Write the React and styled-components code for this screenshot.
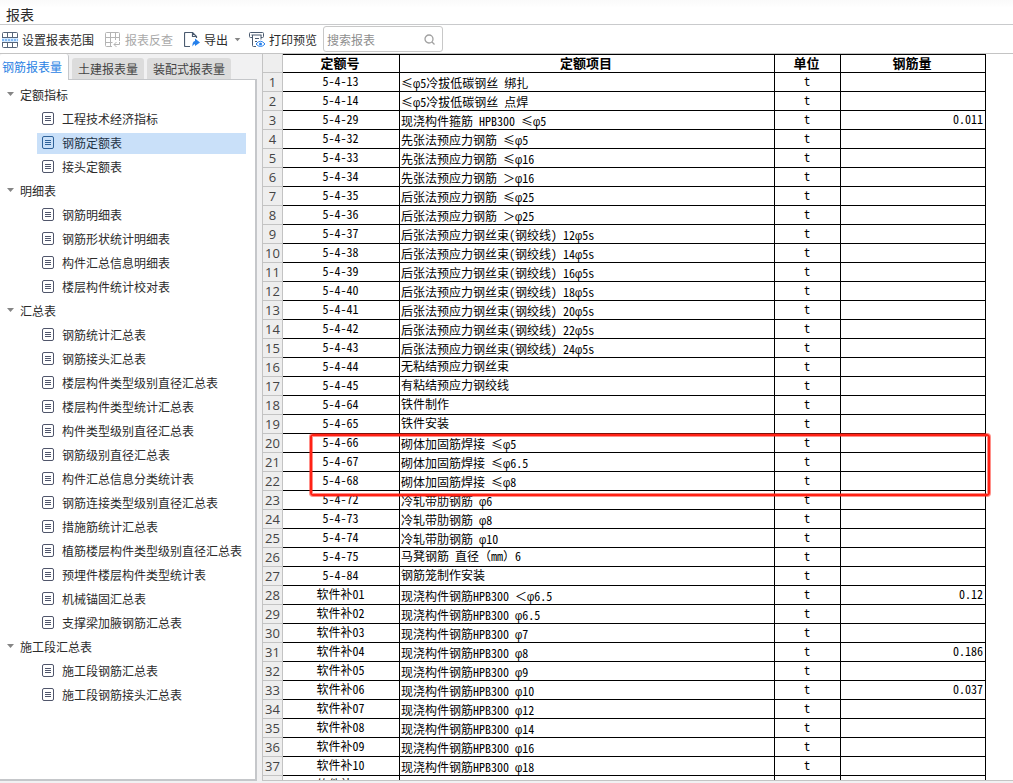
import { useState } from "react";
import styled, { createGlobalStyle, css } from "styled-components";

const GlobalStyle = createGlobalStyle`
  * {
    box-sizing: border-box;
  }
  body {
    margin: 0;
    background: #fff;
    color: #2b2b2b;
    font-family: "Noto Sans CJK SC", sans-serif;
    font-size: 12px;
  }
  button {
    border: none;
    background: none;
    padding: 0;
    color: inherit;
    font: inherit;
    cursor: pointer;
  }
`;

const Window = styled.div`
  display: flex;
  flex-direction: column;
  height: 100vh;
  overflow: hidden;
`;
const TitleBar = styled.header`
  flex: none;
  height: 25px;
  padding: 4px 6px 0;
  border-bottom: 1px solid #c9cacc;
  background: linear-gradient(#fafafa, #fff 8px);
`;
const Title = styled.h1`
  margin: 0;
  font-size: 14px;
  font-weight: 400;
  line-height: 20px;
`;

//工具栏
const Toolbar = styled.div`
  flex: none;
  display: flex;
  align-items: center;
  gap: 6px;
  height: 29px;
  padding-left: 2px;
  border-bottom: 1px solid #c4c4c4;
`;
const ToolGroup = styled.div`
  display: flex;
  gap: 11px;
`;
const ToolButton = styled.button`
  display: flex;
  align-items: center;
  gap: 4px;
  padding-top: 2px;
  line-height: 18px;
  white-space: nowrap;
  &:disabled {
    color: #a9a9a9;
    cursor: default;
  }
`;
const SearchBox = styled.label`
  display: flex;
  align-items: center;
  width: 120px;
  height: 26px;
  padding: 0 7px 0 3px;
  border: 1px solid #c8c8c8;
  border-radius: 3px;
  background: #fff;
`;
const SearchInput = styled.input`
  flex: 1;
  min-width: 0;
  padding: 0;
  border: none;
  outline: none;
  background: none;
  font: inherit;
  &::placeholder {
    color: #8e8e8e;
    opacity: 1;
  }
`;

const Body = styled.div`
  flex: 1;
  display: flex;
  min-height: 0;
  padding-bottom: 2px;
  background: #f1f1f2;
`;
const Side = styled.aside`
  flex: none;
  display: flex;
  flex-direction: column;
  width: 257px;
  margin-right: 5px;
`;
const Tabs = styled.div`
  flex: none;
  display: flex;
  align-items: flex-end;
  gap: 3px;
  height: 25px;
`;
const Tab = styled.button`
  height: 21px;
  padding: 0 6px;
  border-radius: 3px 3px 0 0;
  background: #dcdcdc;
  color: #444;
  line-height: 20px;
  ${(props) =>
    props.$active &&
    css`
      position: relative;
      height: 26px;
      margin-bottom: -1px;
      padding: 0 6px 0 2px;
      border-right: 1px solid #c5c7ca;
      background: #fff;
      color: #2a82e4;
      line-height: 26px;
    `}
`;
const TreePanel = styled.nav`
  flex: 1;
  min-height: 0;
  overflow: hidden;
  padding-top: 3px;
  border: solid #c5c7ca;
  border-width: 1px 2px 2px 0;
  background: #fff;
`;
const GroupButton = styled.button`
  display: flex;
  align-items: center;
  gap: 6px;
  width: 100%;
  height: 24px;
  padding: 0 0 2px 7px;
`;
const TreeList = styled.ul`
  margin: 0;
  padding: 0 9px 0 37px;
  list-style: none;
`;
const TreeItem = styled.li`
  height: 24px;
  padding: 2px 0 1px;
`;
const ReportButton = styled.button`
  display: flex;
  align-items: center;
  gap: 8px;
  width: 100%;
  height: 21px;
  padding: 0 0 2px 5px;
  color: ${(props) => (props.$selected ? "#1f3447" : "#2b2b2b")};
  background: ${(props) => (props.$selected ? "#c9e0f9" : "transparent")};
  white-space: nowrap;
`;

//报表表格
const SheetArea = styled.main`
  flex: 1;
  min-width: 0;
  overflow: hidden;
  border-bottom: 1px solid #c4c4c4;
  background: #fff;
`;
const Sheet = styled.div`
  position: relative;
  width: 724px;
`;
const Table = styled.table`
  width: 100%;
  border-collapse: separate;
  border-spacing: 0;
  border-left: 1px solid #c3c3c3;
  table-layout: fixed;
  color: #000;
  line-height: 16px;
  font-feature-settings: "hwid";
`;
const HeadCell = styled.th`
  height: 19px;
  padding: 0 2px 0 0;
  border: solid #000;
  border-width: 1px 1px 1px 0;
  font-size: 13px;
  vertical-align: top;
`;
const RowHead = styled.th`
  height: 19px;
  padding: 0;
  border: solid #c3c3c3;
  border-width: 0 1px 1px 0;
  background: #eee;
  color: #444;
  font-family: "Open Sans", sans-serif;
  font-size: 13px;
  font-weight: 400;
  line-height: 18px;
  vertical-align: top;
`;
const Cell = styled.td`
  height: 19px;
  padding: ${(props) => (props.$low ? "2px" : "0")} 2px 0 1px;
  border: solid #000;
  border-width: 0 1px 1px 0;
  text-align: ${(props) => props.$align || "center"};
  vertical-align: top;
  white-space: pre;
`;
const Phi = styled.span`
  font-family: "Liberation Mono", monospace;
  line-height: 0;
`;
const FullWidth = styled.span`
  font-feature-settings: normal;
`;
const Highlight = styled.div`
  position: absolute;
  top: 380px;
  left: 48px;
  width: 680px;
  height: 62px;
  border: 2px solid #ff2215;
  border-radius: 3px;
  box-shadow:
    0 0 0 1px #ff221580,
    inset 0 0 0 1px #ff221580;
  pointer-events: none;
`;

const GridIcon = () => (
  <svg width="16" height="16" fill="none" stroke="#56657a">
    <path fill="#d4e9ff" stroke="none" d="M0 6h16v4H0z" />
    <path d="M.5 6V1.500q0-1 1-1h13q1 0 1 1V6M.5 10v4.500q0 1 1 1h13q1 0 1-1V10M5.500.5V6M5.500 10v5.500M10.500.5V6M10.500 10v5.500M.5 5.500h15M.5 10.500h15" />
    <path stroke="#2f87e8" strokeDasharray="2 1" d="M0 8h16" />
  </svg>
);
const TraceIcon = () => (
  <svg width="16" height="16" fill="none" stroke="#b4b4b4">
    <path d="M14.500 9V1.500q0-1-1-1h-12q-1 0-1 1v12q0 1 1 1H7M.5 5.500h14M.5 10.500h7M5.500.5v14M10.500.5V8M9 12.500h5.500V10M11.500 10L9 12.500l2.500 2.500" />
  </svg>
);
const ExportIcon = () => (
  <svg width="16" height="16" fill="none" stroke="#4b5b70">
    <path
      d="M6 14.500H1.500q-1 0-1-1v-12q0-1 1-1H8.500L12.500 4.500V6M8.500.5v4h4"
      strokeWidth="1.200"
    />
    <path
      fill="#2680eb"
      stroke="none"
      d="M11 6.500l5 4-5 3.500v-2q-1.500 0-2.500 2.500-.5-5 2.500-5.500z"
    />
  </svg>
);
const PrintIcon = () => (
  <svg width="16" height="16" fill="none" stroke="#4b5b70">
    <path d="M3 5.500H1.500q-1 0-1-1v-3q0-1 1-1h12q1 0 1 1v3q0 1-1 1H12M2.500 3h10M3.500 3v10.500q0 1 1 1H7M12 3v4.500M6 6.500h4M6 9.500h2" />
    <path fill="#fff" stroke="#2680eb" d="M7 12q4.500-5.500 9 0-4.500 5-9 0z" />
    <circle cx="11.500" cy="12" r="1.500" fill="#2680eb" stroke="none" />
  </svg>
);
const CaretIcon = ({ width = 7, height = 5 }) => (
  <svg width={width} height={height} viewBox="0 0 7 5">
    <path fill="#858585" d="M0 0h7L3.500 4z" />
  </svg>
);
const SearchIcon = () => (
  <svg width="11" height="11" fill="none" stroke="#a0a0a0" strokeWidth="1.300">
    <circle cx="5" cy="5" r="4" />
    <path d="M8 8l2.500 2.500" />
  </svg>
);
const ReportIcon = ({ selected }) => (
  <svg
    width="12"
    height="13"
    fill="none"
    stroke={selected ? "#2f6299" : "#50566b"}
  >
    <rect x=".5" y=".5" width="11" height="12" rx="1.500" />
    <path d="M3 4.500h6M3 6.500h6M3 8.500h6" />
  </svg>
);

const tabs = ["钢筋报表量", "土建报表量", "装配式报表量"];

const groups = [
  {
    name: "定额指标",
    reports: ["工程技术经济指标", "钢筋定额表", "接头定额表"],
  },
  {
    name: "明细表",
    reports: [
      "钢筋明细表",
      "钢筋形状统计明细表",
      "构件汇总信息明细表",
      "楼层构件统计校对表",
    ],
  },
  {
    name: "汇总表",
    reports: [
      "钢筋统计汇总表",
      "钢筋接头汇总表",
      "楼层构件类型级别直径汇总表",
      "楼层构件类型统计汇总表",
      "构件类型级别直径汇总表",
      "钢筋级别直径汇总表",
      "构件汇总信息分类统计表",
      "钢筋连接类型级别直径汇总表",
      "措施筋统计汇总表",
      "植筋楼层构件类型级别直径汇总表",
      "预埋件楼层构件类型统计表",
      "机械锚固汇总表",
      "支撑梁加腋钢筋汇总表",
    ],
  },
  {
    name: "施工段汇总表",
    reports: ["施工段钢筋汇总表", "施工段钢筋接头汇总表"],
  },
];

//定额号, 定额项目, 钢筋量
const rows = [
  ["5-4-13", "≤φ5冷拔低碳钢丝 绑扎"],
  ["5-4-14", "≤φ5冷拔低碳钢丝 点焊"],
  ["5-4-29", "现浇构件箍筋 HPB300 ≤φ5", "0.011"],
  ["5-4-32", "先张法预应力钢筋 ≤φ5"],
  ["5-4-33", "先张法预应力钢筋 ≤φ16"],
  ["5-4-34", "先张法预应力钢筋 ＞φ16"],
  ["5-4-35", "后张法预应力钢筋 ≤φ25"],
  ["5-4-36", "后张法预应力钢筋 ＞φ25"],
  ["5-4-37", "后张法预应力钢丝束(钢绞线) 12φ5s"],
  ["5-4-38", "后张法预应力钢丝束(钢绞线) 14φ5s"],
  ["5-4-39", "后张法预应力钢丝束(钢绞线) 16φ5s"],
  ["5-4-40", "后张法预应力钢丝束(钢绞线) 18φ5s"],
  ["5-4-41", "后张法预应力钢丝束(钢绞线) 20φ5s"],
  ["5-4-42", "后张法预应力钢丝束(钢绞线) 22φ5s"],
  ["5-4-43", "后张法预应力钢丝束(钢绞线) 24φ5s"],
  ["5-4-44", "无粘结预应力钢丝束"],
  ["5-4-45", "有粘结预应力钢绞线"],
  ["5-4-64", "铁件制作"],
  ["5-4-65", "铁件安装"],
  ["5-4-66", "砌体加固筋焊接 ≤φ5"],
  ["5-4-67", "砌体加固筋焊接 ≤φ6.5"],
  ["5-4-68", "砌体加固筋焊接 ≤φ8"],
  ["5-4-72", "冷轧带肋钢筋 φ6"],
  ["5-4-73", "冷轧带肋钢筋 φ8"],
  ["5-4-74", "冷轧带肋钢筋 φ10"],
  ["5-4-75", "马凳钢筋 直径（mm）6"],
  ["5-4-84", "钢筋笼制作安装"],
  ["软件补01", "现浇构件钢筋HPB300 ＜φ6.5", "0.12"],
  ["软件补02", "现浇构件钢筋HPB300 φ6.5"],
  ["软件补03", "现浇构件钢筋HPB300 φ7"],
  ["软件补04", "现浇构件钢筋HPB300 φ8", "0.186"],
  ["软件补05", "现浇构件钢筋HPB300 φ9"],
  ["软件补06", "现浇构件钢筋HPB300 φ10", "0.037"],
  ["软件补07", "现浇构件钢筋HPB300 φ12"],
  ["软件补08", "现浇构件钢筋HPB300 φ14"],
  ["软件补09", "现浇构件钢筋HPB300 φ16"],
  ["软件补10", "现浇构件钢筋HPB300 φ18"],
  ["软件补11", "现浇构件钢筋HPB300 φ20"],
];

//φ和全角符号要单独处理, 否则宽度不对
function ItemName({ text }) {
  return text.split(/([φ＜＞（）])/).map((part, index) => {
    if (part === "φ") return <Phi key={index}>{part}</Phi>;
    if (index % 2 === 1) return <FullWidth key={index}>{part}</FullWidth>;
    return part;
  });
}

function ReportTree() {
  const [selected, setSelected] = useState("钢筋定额表");
  const [closed, setClosed] = useState([]);
  const toggle = (name) => {
    if (closed.includes(name)) {
      setClosed(closed.filter((item) => item !== name));
    } else {
      setClosed([...closed, name]);
    }
  };
  return (
    <TreePanel>
      {groups.map((group) => (
        <div key={group.name}>
          <GroupButton onClick={() => toggle(group.name)}>
            <CaretIcon />
            {group.name}
          </GroupButton>
          {!closed.includes(group.name) && (
            <TreeList>
              {group.reports.map((name) => (
                <TreeItem key={name}>
                  <ReportButton
                    $selected={selected === name}
                    onClick={() => setSelected(name)}
                  >
                    <ReportIcon selected={selected === name} />
                    {name}
                  </ReportButton>
                </TreeItem>
              ))}
            </TreeList>
          )}
        </div>
      ))}
    </TreePanel>
  );
}

function ReportSheet() {
  return (
    <SheetArea>
      <Sheet>
        <Table>
          <colgroup>
            <col width="20" />
            <col width="117" />
            <col width="375" />
            <col width="66" />
            <col width="145" />
          </colgroup>
          <thead>
            <tr>
              <RowHead as="td" />
              <HeadCell>定额号</HeadCell>
              <HeadCell>定额项目</HeadCell>
              <HeadCell>单位</HeadCell>
              <HeadCell>钢筋量</HeadCell>
            </tr>
          </thead>
          <tbody>
            {rows.map(([code, item, amount], index) => (
              <tr key={code}>
                <RowHead>{index + 1}</RowHead>
                <Cell>{code}</Cell>
                <Cell $align="left" $low={item.includes("φ")}>
                  <ItemName text={item} />
                </Cell>
                <Cell>t</Cell>
                <Cell $align="right">{amount}</Cell>
              </tr>
            ))}
          </tbody>
        </Table>
        <Highlight />
      </Sheet>
    </SheetArea>
  );
}

function App() {
  const [tab, setTab] = useState(tabs[0]);
  const [keyword, setKeyword] = useState("");
  return (
    <Window>
      <GlobalStyle />
      <TitleBar>
        <Title>报表</Title>
      </TitleBar>
      <Toolbar>
        <ToolGroup>
          <ToolButton>
            <GridIcon />
            设置报表范围
          </ToolButton>
          <ToolButton disabled>
            <TraceIcon />
            报表反查
          </ToolButton>
          <ToolButton>
            <ExportIcon />
            导出
            <CaretIcon width={11} height={4} />
          </ToolButton>
        </ToolGroup>
        <ToolButton>
          <PrintIcon />
          打印预览
        </ToolButton>
        <SearchBox>
          <SearchInput
            aria-label="搜索报表"
            placeholder="搜索报表"
            value={keyword}
            onChange={(e) => setKeyword(e.target.value)}
          />
          <SearchIcon />
        </SearchBox>
      </Toolbar>
      <Body>
        <Side>
          <Tabs>
            {tabs.map((name) => (
              <Tab key={name} $active={tab === name} onClick={() => setTab(name)}>
                {name}
              </Tab>
            ))}
          </Tabs>
          <ReportTree />
        </Side>
        <ReportSheet />
      </Body>
    </Window>
  );
}

export default App;
